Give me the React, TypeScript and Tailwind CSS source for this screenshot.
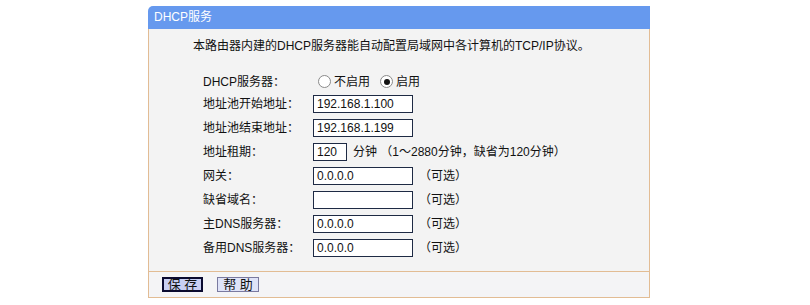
import React from 'react';

const font = { fontFamily: '"Liberation Sans", "Noto Sans CJK SC", sans-serif' };

const Radio = ({ checked }: { checked?: boolean }) => (
  <span className="flex h-[13px] w-[13px] items-center justify-center rounded-full border border-[#8a8a8a] bg-white">
    {checked && <span className="h-[6px] w-[6px] rounded-full bg-[#111]" />}
  </span>
);

const Field = ({ value, w = 'w-[100px]' }: { value: string; w?: string }) => (
  <div className={`h-[18px] ${w} border border-[#1e2a44] bg-white pl-[3px] text-[12px] leading-[16px] text-[#111]`}>
    {value}
  </div>
);

const Row = ({ label, children, h = 'h-[24px]' }: { label: string; children: React.ReactNode; h?: string }) => (
  <div className={`flex ${h} items-center`}>
    <div className="w-[110px] shrink-0">{label}</div>
    <div className="flex items-center">{children}</div>
  </div>
);

const App = () => {
  return (
    <div className="h-[305px] w-[810px] bg-white pl-[148px] pt-[6px] text-[12px] text-[#111]" style={font}>
      <div className="w-[502px]">
        <div className="h-[23px] rounded-tl-[5px] bg-[#6699ee] pl-[6px] leading-[23px] text-white">DHCP服务</div>
        <div className="h-[243px] border-x border-b border-[#e2bc94] bg-[#f3f3f3]">
          <p className="pl-[44px] pt-[7px] leading-[20px]">本路由器内建的DHCP服务器能自动配置局域网中各计算机的TCP/IP协议。</p>
          <div className="mt-[15px] flex flex-col pl-[54px]">
            <Row label="DHCP服务器：" h="h-[21px]">
              <div className="ml-[5px] flex items-center gap-[3px]">
                <Radio />
                <span>不启用</span>
              </div>
              <div className="ml-[10px] flex items-center gap-[3px]">
                <Radio checked />
                <span>启用</span>
              </div>
            </Row>
            <Row label="地址池开始地址：">
              <Field value="192.168.1.100" />
            </Row>
            <Row label="地址池结束地址：">
              <Field value="192.168.1.199" />
            </Row>
            <Row label="地址租期：">
              <Field value="120" w="w-[34px]" />
              <span className="ml-[6px]">分钟 （1～2880分钟，缺省为120分钟）</span>
            </Row>
            <Row label="网关：">
              <Field value="0.0.0.0" />
              <span className="ml-[6px]">（可选）</span>
            </Row>
            <Row label="缺省域名：">
              <Field value="" />
              <span className="ml-[6px]">（可选）</span>
            </Row>
            <Row label="主DNS服务器：">
              <Field value="0.0.0.0" />
              <span className="ml-[6px]">（可选）</span>
            </Row>
            <Row label="备用DNS服务器：">
              <Field value="0.0.0.0" />
              <span className="ml-[6px]">（可选）</span>
            </Row>
          </div>
        </div>
        <div className="flex h-[26px] items-center gap-[14px] border-x border-b border-[#e2bc94] bg-[#f4f4f6] pl-[13px]">
          <button className="flex h-[15px] w-[41px] items-center justify-center whitespace-nowrap border-2 border-[#0a0a30] bg-[#c9cff2] text-[13px] leading-none">保&nbsp;存</button>
          <button className="flex h-[15px] w-[42px] items-center justify-center whitespace-nowrap border border-[#7a7aa0] bg-[#dfe3f8] text-[13px] leading-none">帮&nbsp;助</button>
        </div>
      </div>
    </div>
  );
};

export default App;
